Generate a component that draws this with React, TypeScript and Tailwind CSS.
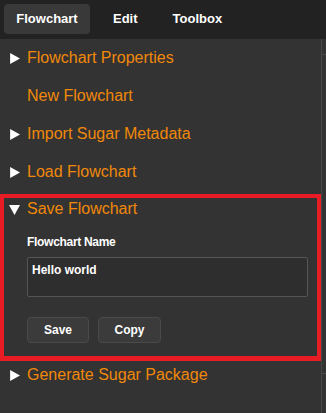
import { useState } from "react";

type Section = {
  title: string;
  expandable: boolean;
};

const sections: Section[] = [
  { title: "Flowchart Properties", expandable: true },
  { title: "New Flowchart", expandable: false },
  { title: "Import Sugar Metadata", expandable: true },
  { title: "Load Flowchart", expandable: true },
];

const Caret = ({ open }: { open: boolean }) => (
  <svg viewBox="0 0 10 10" className="w-[11px] h-[11px] text-white" fill="currentColor">
    {open ? <polygon points="0,1 10,1 5,10" /> : <polygon points="1,0 10,5 1,10" />}
  </svg>
);

const Row = ({ title, expandable, open = false }: Section & { open?: boolean }) => (
  <div className="flex items-center h-[38px] pl-[9px] gap-[7px]">
    <span className="w-[11px] flex justify-center">{expandable && <Caret open={open} />}</span>
    <span className="text-[16px] text-[#f0880a]">{title}</span>
  </div>
);

const tabs = [
  { label: "Flowchart", cls: "bg-[#393939] w-[86px] justify-center" },
  { label: "Edit", cls: "ml-[23px]" },
  { label: "Toolbox", cls: "ml-[35px]" },
];

export default function App() {
  const [name, setName] = useState("Hello world");

  return (
    <div
      className="w-[326px] h-[413px] bg-[#333333] overflow-hidden flex flex-col"
      style={{ fontFamily: '"Liberation Sans", Arial, sans-serif' }}
    >
      <div className="h-[39px] bg-[#222222] flex items-start pt-[4px] px-1 shrink-0">
        {tabs.map((t) => (
          <div
            key={t.label}
            className={`h-[30px] flex items-center rounded-[4px] text-[13px] font-bold text-white ${t.cls}`}
          >
            {t.label}
          </div>
        ))}
      </div>

      <div className="flex flex-1">
        <div className="w-[321px] flex flex-col">
          {sections.map((s) => (
            <Row key={s.title} {...s} />
          ))}

          <div className="border-[4px] border-b-[5px] border-[#e81c24] mt-[3px] pb-[13px]">
            <div className="flex items-center h-[22px] pl-[5px] gap-[7px]">
              <span className="w-[11px] flex justify-center">
                <Caret open />
              </span>
              <span className="text-[16px] text-[#f0880a]">Save Flowchart</span>
            </div>
            <div className="pl-[23px] pr-[9px] pt-[15px]">
              <label className="block h-[14px] leading-[14px] text-[12px] font-bold text-white tracking-[-0.3px] mb-[8px]">
                Flowchart Name
              </label>
              <textarea
                value={name}
                onChange={(e) => setName(e.target.value)}
                className="block w-full h-[40px] bg-[#2e2e2e] border border-[#555555] rounded-[2px] px-[4px] py-[3px] text-[12px] font-bold text-white resize-none outline-none"
              />
              <div className="flex gap-[9px] mt-[20px]">
                <button className="w-[62px] h-[26px] bg-[#3b3b3b] border border-[#4a4a4a] rounded-[4px] text-[12px] font-bold text-white">
                  Save
                </button>
                <button className="w-[63px] h-[26px] bg-[#3b3b3b] border border-[#4a4a4a] rounded-[4px] text-[12px] font-bold text-white">
                  Copy
                </button>
              </div>
            </div>
          </div>

          <div className="mt-[-5px]">
            <Row title="Generate Sugar Package" expandable />
          </div>
        </div>
        <div className="w-[5px] border-l border-[#474747] flex flex-col">
          <div className="h-[15px]" />
          <div className="h-px bg-[#4a4a4a]" />
          <div className="h-[318px]" />
          <div className="h-px bg-[#4a4a4a]" />
        </div>
      </div>
    </div>
  );
}
